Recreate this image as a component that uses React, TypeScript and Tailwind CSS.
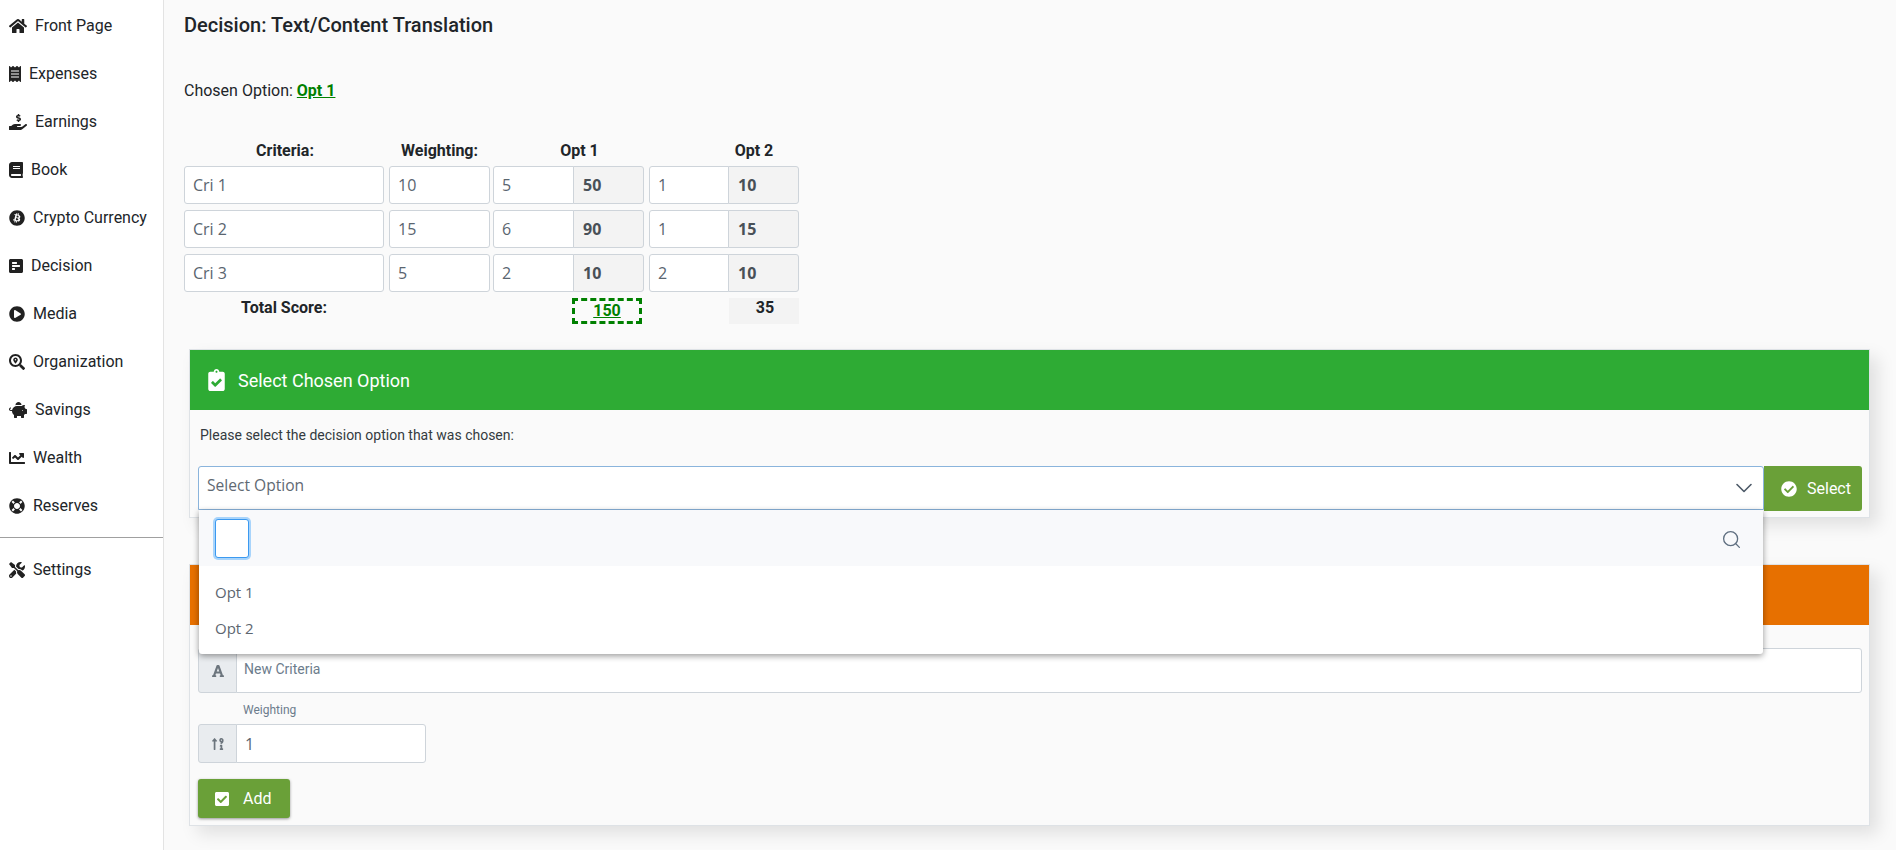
import React from 'react';
import { ChevronDown, Search } from 'lucide-react';
import {
  FaHome,
  FaReceipt,
  FaHandHoldingUsd,
  FaBook,
  FaBitcoin,
  FaPollH,
  FaPlayCircle,
  FaSearchLocation,
  FaPiggyBank,
  FaChartLine,
  FaLifeRing,
  FaTools,
  FaClipboardCheck,
  FaCheckCircle,
  FaCheckSquare,
  FaFont,
  FaSortNumericUpAlt,
} from 'react-icons/fa';

const navItems = [
  { label: 'Front Page', icon: FaHome, iconCls: 'w-[18px]' },
  { label: 'Expenses', icon: FaReceipt, iconCls: 'w-[12px]' },
  { label: 'Earnings', icon: FaHandHoldingUsd, iconCls: 'w-[18px]' },
  { label: 'Book', icon: FaBook, iconCls: 'w-[14px]' },
  { label: 'Crypto Currency', icon: FaBitcoin, iconCls: 'w-[16px]' },
  { label: 'Decision', icon: FaPollH, iconCls: 'w-[14px]' },
  { label: 'Media', icon: FaPlayCircle, iconCls: 'w-[16px]' },
  { label: 'Organization', icon: FaSearchLocation, iconCls: 'w-[16px]' },
  { label: 'Savings', icon: FaPiggyBank, iconCls: 'w-[18px]' },
  { label: 'Wealth', icon: FaChartLine, iconCls: 'w-[16px]' },
  { label: 'Reserves', icon: FaLifeRing, iconCls: 'w-[16px]' },
];

const rows = [
  { name: 'Cri 1', weight: '10', a: '5', aScore: '50', b: '1', bScore: '10' },
  { name: 'Cri 2', weight: '15', a: '6', aScore: '90', b: '1', bScore: '15' },
  { name: 'Cri 3', weight: '5', a: '2', aScore: '10', b: '2', bScore: '10' },
];

const inputCls =
  "h-[38px] shrink-0 bg-white border border-[#ced4da] rounded-[3px] pl-[8px] flex items-center text-[16px] text-[#5a6570] font-['Open_Sans',sans-serif]";
const scoreCls =
  "w-[71px] h-[38px] shrink-0 -ml-px bg-[#f3f3f3] border border-[#ced4da] rounded-r-[3px] pl-[9px] flex items-center font-bold text-[16px] text-[#495057] font-['Open_Sans',sans-serif]";

const NavRow = ({ item }: { item: (typeof navItems)[number] }) => {
  const Icon = item.icon;
  return (
    <div className="h-[48px] pl-[9px] flex items-center gap-[8px] text-[16px] text-[#212529]">
      <Icon className={`h-[16px] shrink-0 text-[#212121] ${item.iconCls}`} />
      <span>{item.label}</span>
    </div>
  );
};

const App = () => {
  return (
    <div className="flex w-[1896px] h-[850px] overflow-hidden bg-[#fafafa] font-['Roboto',sans-serif] text-[#212529]">
      <div className="w-[164px] shrink-0 bg-white border-r border-[#e3e3e3] pt-[2px]">
        {navItems.map((x) => (
          <NavRow key={x.label} item={x} />
        ))}
        <div className="mt-[7px] mb-[8px] border-t border-[#a0a0a0]" />
        <NavRow item={{ label: 'Settings', icon: FaTools, iconCls: 'w-[16px]' }} />
      </div>

      <div className="flex-1 pl-[20px]">
        <h1 className="pt-[13px] text-[20px] leading-[24px] font-medium text-[#212529]">
          Decision: Text/Content Translation
        </h1>
        <div className="mt-[42px] text-[16px] leading-[24px]">
          Chosen Option:{' '}
          <span className="font-bold underline text-[#008000]">Opt 1</span>
        </div>

        <div className="mt-[36px] w-[640px] text-[16px]">
          <div className="flex h-[24px] mb-[3px] font-bold leading-[24px] text-center">
            <div className="w-[200px] mr-[5px] pl-[2px]">Criteria:</div>
            <div className="w-[101px] mr-[3px]">Weighting:</div>
            <div className="w-[151px] mr-[5px] pl-[22px]">Opt 1</div>
            <div className="w-[150px] pl-[60px]">Opt 2</div>
          </div>
          {rows.map((r) => (
            <div key={r.name} className="flex mb-[6px]">
              <div className={`${inputCls} w-[200px] mr-[5px]`}>{r.name}</div>
              <div className={`${inputCls} w-[101px] mr-[3px]`}>{r.weight}</div>
              <div className={`${inputCls} w-[81px] rounded-r-none`}>{r.a}</div>
              <div className={`${scoreCls} mr-[5px]`}>{r.aScore}</div>
              <div className={`${inputCls} w-[80px] rounded-r-none`}>{r.b}</div>
              <div className={scoreCls}>{r.bScore}</div>
            </div>
          ))}
          <div className="flex font-bold">
            <div className="w-[200px] mr-[5px] text-center leading-[20px]">Total Score:</div>
            <div className="w-[101px] mr-[3px]" />
            <div className="w-[79px]" />
            <div className="w-[70px] h-[26px] border-[3px] border-dashed border-[#008000] text-[#008000] underline flex items-center justify-center">
              150
            </div>
            <div className="w-[87px]" />
            <div className="w-[70px] h-[26px] bg-[#f3f3f3] flex items-center justify-center pb-[6px] pl-[2px]">35</div>
          </div>
        </div>

        <div className="relative mt-[25px] ml-[5px] w-[1681px] h-[169px] bg-[#fafafa] border border-[#dee2e6] shadow-[8px_8px_16px_rgba(0,0,0,0.1)]">
          <div className="h-[60px] bg-[#2eab34] text-white flex items-center pl-[18px] gap-[13px] text-[18px]">
            <FaClipboardCheck className="h-[22px] w-[17px]" />
            <span>Select Chosen Option</span>
          </div>
          <div className="pl-[10px] pt-[15px] text-[14px] leading-[20px] text-[#343a40]">
            Please select the decision option that was chosen:
          </div>
          <div className="flex mt-[21px] ml-[8px]">
            <div className="w-[1566px] h-[44px] bg-white border border-[#8ab4dc] rounded-t-[3px] flex items-center justify-between pl-[8px] pr-[5px] pb-[5px] text-[15.6px] text-[#5f6973] font-['Open_Sans',sans-serif]">
              <span>Select Option</span>
              <ChevronDown size={28} strokeWidth={1.4} className="text-[#4d5a68] mt-[5px]" />
            </div>
            <div className="w-[98px] h-[45px] bg-[#6aa038] rounded-r-[3px] text-white flex items-center pl-[17px] gap-[10px] text-[16px]">
              <FaCheckCircle size={16} />
              <span className="pt-[1px]">Select</span>
            </div>
          </div>

          <div className="absolute z-10 left-[9px] top-[160px] w-[1564px] h-[144px] bg-white rounded-b-[3px] shadow-[0_2px_6px_rgba(0,0,0,0.4)]">
            <div className="h-[56px] bg-[#f8f9fb] flex items-center justify-between pl-[16px] pr-[21px]">
              <div className="w-[34px] h-[39px] bg-white border border-[#3b99f0] rounded-[3px] shadow-[0_0_0_2px_#a8d4fb]" />
              <Search size={21} strokeWidth={1.5} className="text-[#5f6f80] mt-[2px]" />
            </div>
            <div className="pt-[8px] pl-[16px] text-[15px] text-[#5d6670] font-['Open_Sans',sans-serif]">
              <div className="h-[36px] flex items-center">Opt 1</div>
              <div className="h-[36px] flex items-center">Opt 2</div>
            </div>
          </div>
        </div>

        <div className="mt-[46px] ml-[5px] w-[1681px] h-[262px] bg-[#fafafa] border border-[#dee2e6] shadow-[8px_8px_16px_rgba(0,0,0,0.1)]">
          <div className="h-[60px] bg-[#e77000]" />
          <div className="pl-[8px] pr-[7px]">
            <div className="mt-[23px] flex h-[45px]">
              <div className="w-[39px] bg-[#e9ecef] border border-[#ced4da] rounded-l-[3px] flex items-center justify-center text-[#6c757d]">
                <FaFont className="h-[14px] w-[12px]" />
              </div>
              <div className="flex-1 -ml-px bg-white border border-[#ced4da] rounded-r-[3px] pl-[7px] pt-[10px] leading-[20px] text-[14px] text-[#6c7c8c]">
                New Criteria
              </div>
            </div>
            <div className="mt-[8px] pl-[45px] text-[12px] leading-[18px] text-[#6c7c8c]">Weighting</div>
            <div className="mt-[5px] flex h-[39px] w-[228px]">
              <div className="w-[39px] bg-[#e9ecef] border border-[#ced4da] rounded-l-[3px] flex items-center justify-center text-[#6c757d]">
                <FaSortNumericUpAlt className="h-[14px] w-[12px]" />
              </div>
              <div className="flex-1 -ml-px bg-white border border-[#ced4da] rounded-r-[3px] pl-[8px] flex items-center text-[16px] text-[#5a6570] font-['Open_Sans',sans-serif]">
                1
              </div>
            </div>
            <div className="mt-[16px] w-[92px] h-[39px] bg-[#6aa038] rounded-[3px] shadow-[0_1px_3px_rgba(0,0,0,0.4)] text-white flex items-center pl-[17px] gap-[14px] text-[16px]">
              <FaCheckSquare className="h-[16px] w-[14px]" />
              <span className="pt-[1px]">Add</span>
            </div>
          </div>
        </div>
      </div>
    </div>
  );
};

export default App;
